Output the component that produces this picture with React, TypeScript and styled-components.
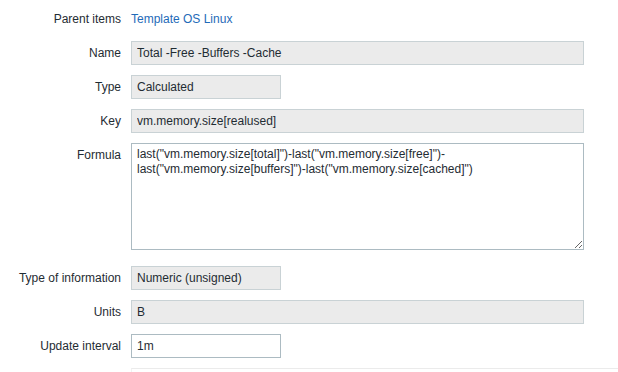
import React from "react";
import styled, { createGlobalStyle } from "styled-components";

const GlobalStyle = createGlobalStyle`
  html, body {
    margin: 0;
    padding: 0;
    background: #ffffff;
    overflow: hidden;
  }
  body {
    font-family: "Liberation Sans", Arial, sans-serif;
    font-size: 12px;
    color: #1f2c33;
  }
`;

const Form = styled.div`
  display: flex;
  flex-direction: column;
  gap: 10px;
  padding-top: 7px;
`;

const Row = styled.div<{ $extra?: number }>`
  display: grid;
  grid-template-columns: 121px 1fr;
  column-gap: 10px;
  align-items: start;
  margin-bottom: ${(p) => p.$extra || 0}px;
`;

const Label = styled.label`
  height: 24px;
  line-height: 24px;
  text-align: right;
  white-space: nowrap;
`;

const Link = styled.a`
  line-height: 24px;
  color: #1f6bb8;
  text-decoration: none;
`;

const Input = styled.input<{ $width: number; $readonly?: boolean }>`
  box-sizing: border-box;
  display: block;
  width: ${(p) => p.$width}px;
  height: 24px;
  margin: 0;
  padding: 0 5px;
  font-family: inherit;
  font-size: 12px;
  color: #1f2c33;
  background: ${(p) => (p.$readonly ? "#ebebeb" : "#ffffff")};
  border: 1px solid ${(p) => (p.$readonly ? "#c9d2d5" : "#acbbc2")};
  border-radius: 0;
  outline: none;
`;

const TextArea = styled.textarea`
  box-sizing: border-box;
  display: block;
  width: 453px;
  height: 107px;
  margin: 0;
  padding: 3px 5px;
  font-family: inherit;
  font-size: 12px;
  line-height: 15px;
  color: #1f2c33;
  background: #ffffff;
  border: 1px solid #acbbc2;
  border-radius: 0;
  outline: none;
`;

const NextBox = styled.div`
  height: 3px;
  border-top: 1px solid #ebebeb;
  border-left: 1px solid #f2f2f2;
`;

const formula =
  'last("vm.memory.size[total]")-last("vm.memory.size[free]")-last("vm.memory.size[buffers]")-last("vm.memory.size[cached]")';

export default function App() {
  return (
    <>
      <GlobalStyle />
      <Form>
        <Row>
          <Label>Parent items</Label>
          <Link href="#">Template OS Linux</Link>
        </Row>
        <Row>
          <Label>Name</Label>
          <Input $width={453} $readonly readOnly value="Total -Free -Buffers -Cache" />
        </Row>
        <Row>
          <Label>Type</Label>
          <Input $width={150} $readonly readOnly value="Calculated" />
        </Row>
        <Row>
          <Label>Key</Label>
          <Input $width={453} $readonly readOnly value="vm.memory.size[realused]" />
        </Row>
        <Row $extra={6}>
          <Label>Formula</Label>
          <TextArea defaultValue={formula} />
        </Row>
        <Row>
          <Label>Type of information</Label>
          <Input $width={150} $readonly readOnly value="Numeric (unsigned)" />
        </Row>
        <Row>
          <Label>Units</Label>
          <Input $width={453} $readonly readOnly value="B" />
        </Row>
        <Row>
          <Label>Update interval</Label>
          <Input $width={150} defaultValue="1m" />
        </Row>
        <Row>
          <Label />
          <NextBox />
        </Row>
      </Form>
    </>
  );
}
